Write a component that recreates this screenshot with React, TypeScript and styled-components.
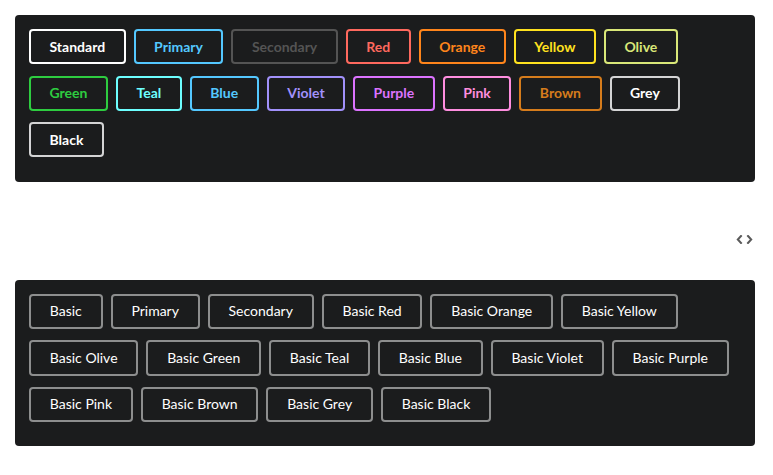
import React from "react";
import styled, { createGlobalStyle } from "styled-components";

const Global = createGlobalStyle`
  html, body { margin: 0; padding: 0; background: #ffffff; }
  body { font-family: Lato, "Helvetica Neue", Arial, sans-serif; font-size: 14px; }
`;

const Page = styled.div`
  padding: 15px 18px 15px 15px;
  display: flex;
  flex-direction: column;
`;

const Segment = styled.div`
  background: #1b1c1d;
  border-radius: 4px;
  padding: 14px 14px 24.4px 14px;
  display: flex;
  flex-wrap: wrap;
  column-gap: 8px;
  row-gap: 11.4px;
`;

const CodeRow = styled.div`
  height: 98px;
  box-sizing: border-box;
  padding-top: 53px;
  padding-right: 2px;
  display: flex;
  align-items: flex-start;
  justify-content: flex-end;
`;

const Button = styled.button<{ $color: string; $text: string; $bold?: boolean }>`
  font-family: Lato, "Helvetica Neue", Arial, sans-serif;
  font-size: 14px;
  line-height: 14px;
  font-weight: ${(p) => (p.$bold ? 700 : 400)};
  padding: 10.6px ${(p) => (p.$bold ? 20.5 : 20.8)}px;
  margin: 0;
  background: transparent;
  color: ${(p) => p.$text};
  border: none;
  box-shadow: 0 0 0 2px ${(p) => p.$color} inset;
  border-radius: 4px;
  cursor: pointer;
`;

const colored: [string, string, string][] = [
  ["Standard", "#ffffff", "#ffffff"],
  ["Primary", "#54c8ff", "#54c8ff"],
  ["Secondary", "#545454", "#545454"],
  ["Red", "#ff695e", "#ff695e"],
  ["Orange", "#ff851b", "#ff851b"],
  ["Yellow", "#ffe21f", "#ffe21f"],
  ["Olive", "#d9e778", "#d9e778"],
  ["Green", "#2ecc40", "#2ecc40"],
  ["Teal", "#6dffff", "#6dffff"],
  ["Blue", "#54c8ff", "#54c8ff"],
  ["Violet", "#a291fb", "#a291fb"],
  ["Purple", "#dc73ff", "#dc73ff"],
  ["Pink", "#ff8edf", "#ff8edf"],
  ["Brown", "#d67c1c", "#d67c1c"],
  ["Grey", "#d4d4d5", "#ffffff"],
  ["Black", "#d4d4d5", "#ffffff"],
];

const basic = [
  "Basic",
  "Primary",
  "Secondary",
  "Basic Red",
  "Basic Orange",
  "Basic Yellow",
  "Basic Olive",
  "Basic Green",
  "Basic Teal",
  "Basic Blue",
  "Basic Violet",
  "Basic Purple",
  "Basic Pink",
  "Basic Brown",
  "Basic Grey",
  "Basic Black",
];

const CodeIcon = () => (
  <svg width="17" height="9" viewBox="0 0 17 9" fill="none" stroke="#5a5a5a" strokeWidth="2" strokeLinecap="square">
    <polyline points="5,1 1.8,4.5 5,8" />
    <polyline points="12,1 15.2,4.5 12,8" />
  </svg>
);

export default function App() {
  return (
    <>
      <Global />
      <Page>
        <Segment>
          {colored.map(([label, c, t]) => (
            <Button key={label} $color={c} $text={t} $bold>
              {label}
            </Button>
          ))}
        </Segment>
        <CodeRow>
          <CodeIcon />
        </CodeRow>
        <Segment>
          {basic.map((label) => (
            <Button key={label} $color="rgba(255,255,255,0.5)" $text="#ffffff">
              {label}
            </Button>
          ))}
        </Segment>
      </Page>
    </>
  );
}
